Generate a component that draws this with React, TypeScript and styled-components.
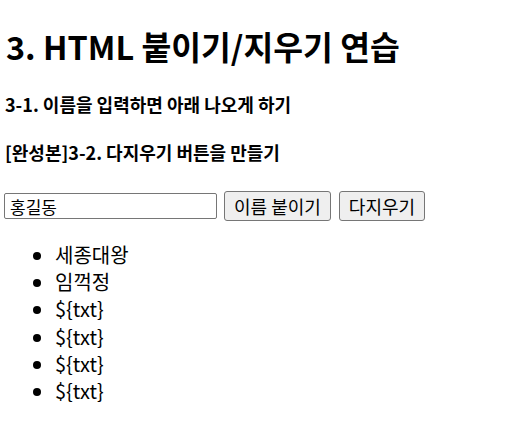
import React, { useState } from 'react';
import styled, { createGlobalStyle } from 'styled-components';

const GlobalStyle = createGlobalStyle`
  html, body {
    margin: 0;
    padding: 0;
    background: #fff;
  }
  body {
    font-family: "Noto Sans CJK KR", "Noto Sans", sans-serif;
    color: #000;
  }
`;

const Page = styled.div`
  padding: 0 0 0 4px;
`;

const Title = styled.h1`
  margin: 24px 0 0 2px;
  font-size: 32.4px;
  line-height: 44px;
  font-weight: 700;
`;

const SubTitle = styled.h4`
  margin: 24px 0 0 1px;
  font-size: 18px;
  line-height: 24px;
  font-weight: 700;
`;

const FormRow = styled.div`
  display: flex;
  align-items: center;
  gap: 7px;
  margin-top: 27px;
`;

const NameInput = styled.input`
  box-sizing: border-box;
  width: 213px;
  height: 26px;
  margin: 0;
  padding: 0 5px;
  border: 1px solid #767676;
  border-radius: 2px;
  font-family: inherit;
  font-size: 17px;
  color: #000;
  outline: none;
`;

const Button = styled.button`
  box-sizing: border-box;
  height: 30px;
  margin: 0 1px 0 0;
  padding: 0 9px;
  border: 1px solid #767676;
  border-radius: 3px;
  background: #efefef;
  font-family: inherit;
  font-size: 18px;
  line-height: 28px;
  color: #000;
  cursor: pointer;
`;

const NameList = styled.ul`
  margin: 20px 0 0;
  padding: 0 0 0 51px;
`;

const NameItem = styled.li`
  font-size: 20px;
  line-height: 27.2px;
`;

export default function App() {
  const [txt, setTxt] = useState('홍길동');
  const [names, setNames] = useState<string[]>([
    '세종대왕',
    '임꺽정',
    '${txt}',
    '${txt}',
    '${txt}',
    '${txt}',
  ]);

  const addName = () => {
    if (!txt) return;
    setNames([...names, txt]);
  };

  return (
    <>
      <GlobalStyle />
      <Page>
        <Title>3. HTML 붙이기/지우기 연습</Title>
        <SubTitle>3-1. 이름을 입력하면 아래 나오게 하기</SubTitle>
        <SubTitle>[완성본]3-2. 다지우기 버튼을 만들기</SubTitle>
        <FormRow>
          <NameInput value={txt} onChange={(e) => setTxt(e.target.value)} />
          <Button onClick={addName}>이름 붙이기</Button>
          <Button onClick={() => setNames([])}>다지우기</Button>
        </FormRow>
        <NameList>
          {names.map((n, i) => (
            <NameItem key={i}>{n}</NameItem>
          ))}
        </NameList>
      </Page>
    </>
  );
}
